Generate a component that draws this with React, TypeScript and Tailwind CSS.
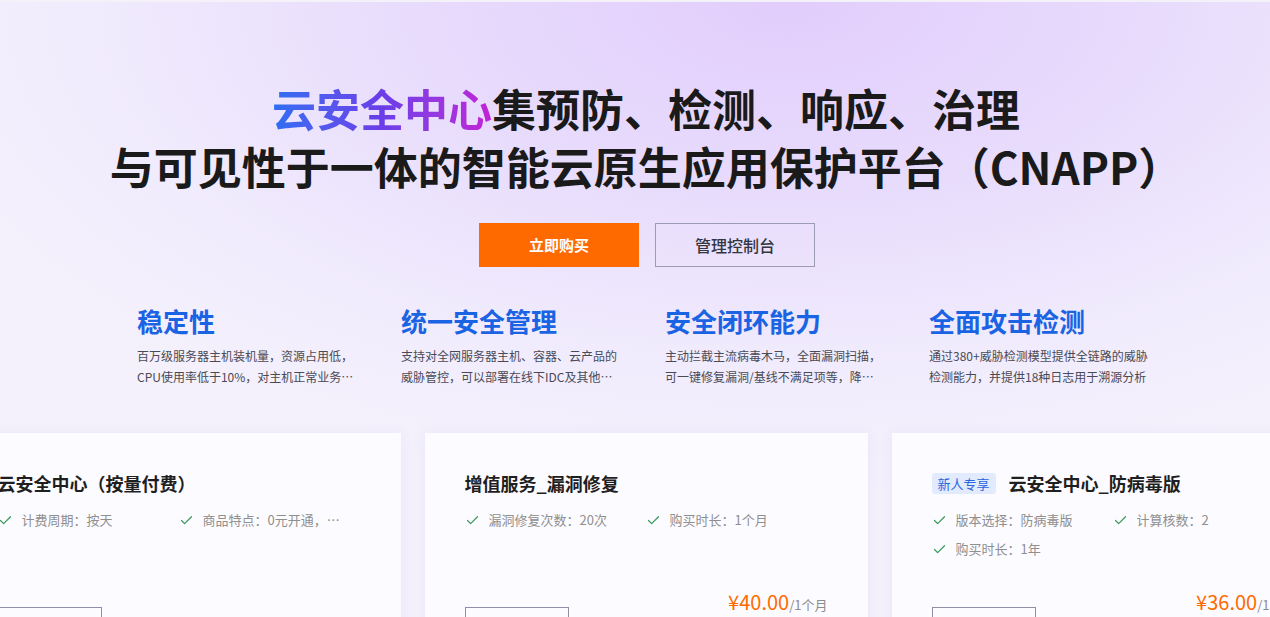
import React from "react";
import { Check } from "lucide-react";

const font = { fontFamily: '"Noto Sans CJK SC", "Noto Sans", sans-serif' };

const features = [
  { t: "稳定性", d: "百万级服务器主机装机量，资源占用低，CPU使用率低于10%，对主机正常业务无影响" },
  { t: "统一安全管理", d: "支持对全网服务器主机、容器、云产品的威胁管控，可以部署在线下IDC及其他云厂商" },
  { t: "安全闭环能力", d: "主动拦截主流病毒木马，全面漏洞扫描，可一键修复漏洞/基线不满足项等，降低风险" },
  { t: "全面攻击检测", d: "通过380+威胁检测模型提供全链路的威胁检测能力，并提供18种日志用于溯源分析" },
];

type CardProps = {
  title: string;
  badge?: string;
  items: string[];
  price?: string;
  unit?: string;
  wide?: boolean;
};

function Card({ title, badge, items, price, unit, wide }: CardProps) {
  return (
    <div className="w-[443px] shrink-0 bg-[#fcfbff] shadow-[0_2px_14px_rgba(110,90,190,0.07)] px-[40px] pt-[37px] h-[260px]">
      <div className="flex items-center h-[26px]">
        {badge && (
          <span className="mr-[13px] h-[21px] px-[6px] rounded-[3px] bg-[#e2ebfd] text-[#2a66dd] text-[13px] leading-[21px]">
            {badge}
          </span>
        )}
        <span className="text-[18px] font-bold text-[#1f1f1f] leading-[26px] whitespace-nowrap">{title}</span>
      </div>
      <div className="mt-[14px] h-[79px] grid grid-cols-[181px_181px] gap-y-[9px] content-start">
        {items.map((it) => (
          <div key={it} className="flex items-center h-[20px] text-[13px] text-[#8f8f8f] whitespace-nowrap overflow-hidden">
            <Check size={15} strokeWidth={2} className="text-[#3b9a5e] shrink-0" />
            <span className="ml-[9px] truncate max-w-[146px]">{it}</span>
          </div>
        ))}
      </div>
      <div className="flex justify-between items-start">
        <div className="mt-[18px] w-[104px] h-[32px] border border-[#8d90a8]" />
        {price && (
          <div className={`flex items-baseline leading-[26px] whitespace-nowrap ${wide ? "mr-[12px]" : ""}`}>
            <span className="text-[20px] text-[#ff6a00]">¥{price}</span>
            <span className="text-[13px] text-[#8c8c8c]">{unit}</span>
          </div>
        )}
      </div>
    </div>
  );
}

export default function App() {
  return (
    <div
      style={font}
      className="w-full h-[617px] overflow-hidden bg-[radial-gradient(ellipse_75%_80%_at_62%_0%,#e2cdfc_0%,#e8dcfc_40%,#f1ecfd_75%,#f4f1fc_100%)] border-t-2 border-[#f4f2f8]"
    >
      <div className="pl-[22px]">
        <h1 className="pt-[77px] text-center text-[44px] font-bold leading-[58px] text-[#1a1a1a] whitespace-nowrap">
          <div>
            <span className="bg-gradient-to-r from-[#2a6ef2] via-[#6a3de8] to-[#c21fd6] bg-clip-text text-transparent">
              云安全中心
            </span>
            集预防、检测、响应、治理
          </div>
          <div>与可见性于一体的智能云原生应用保护平台（CNAPP）</div>
        </h1>
        <div className="mt-[28px] flex justify-center gap-[16px] pl-[2px]">
          <button className="w-[160px] h-[44px] bg-[#ff6a00] text-white text-[15px] font-bold">立即购买</button>
          <button className="w-[160px] h-[44px] border border-[#9b9cb4] text-[#333640] text-[16px] font-medium">
            管理控制台
          </button>
        </div>
        <div className="mt-[37px] flex justify-center gap-[40px] pr-[2px]">
          {features.map((f) => (
            <div key={f.t} className="w-[224px]">
              <div className="text-[26px] font-bold leading-[34px] text-[#1a64e4]">{f.t}</div>
              <p className="mt-[7px] w-[220px] text-[12px] leading-[21px] text-[#4a4a55] line-clamp-2">{f.d}</p>
            </div>
          ))}
        </div>
        <div className="mt-[46px] flex justify-center gap-[24px]">
          <Card title="云安全中心（按量付费）" items={["计费周期：按天", "商品特点：0元开通，按量计费"]} />
          <Card title="增值服务_漏洞修复" items={["漏洞修复次数：20次", "购买时长：1个月"]} price="40.00" unit="/1个月" />
          <Card
            title="云安全中心_防病毒版"
            badge="新人专享"
            items={["版本选择：防病毒版", "计算核数：2", "购买时长：1年"]}
            price="36.00"
            unit="/1年"
            wide
          />
        </div>
      </div>
    </div>
  );
}
